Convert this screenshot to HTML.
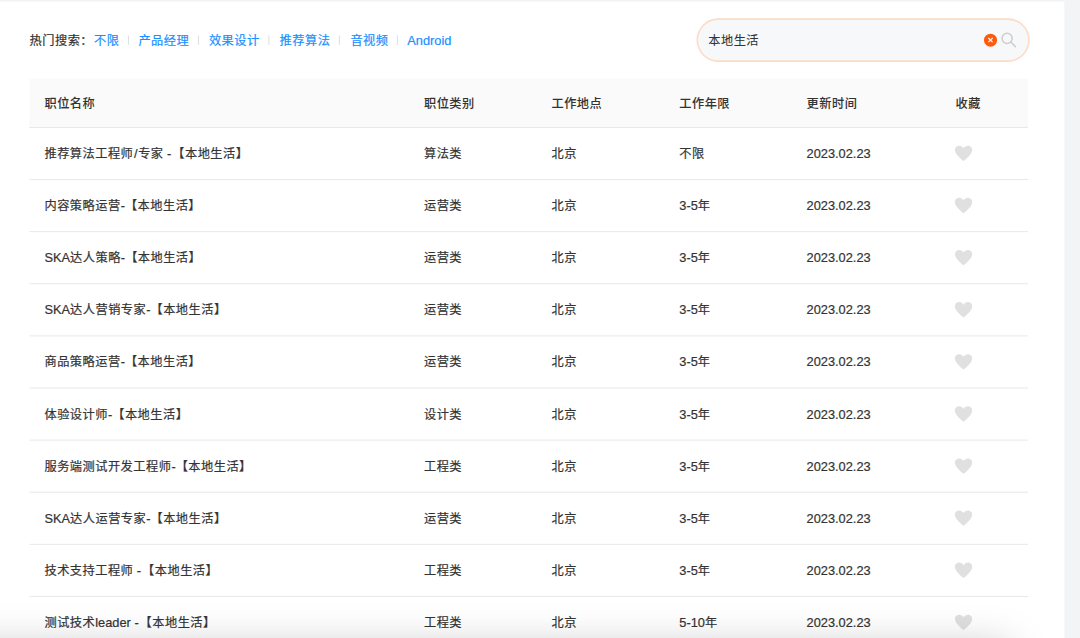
<!DOCTYPE html>
<html lang="zh-CN"><head><meta charset="utf-8"><title>职位列表</title>
<style>
html,body{margin:0;padding:0;}
body{width:1080px;height:638px;overflow:hidden;background:#f3f4f6;position:relative;
font-family:"Liberation Sans","Noto Sans CJK SC",sans-serif;font-size:12.2px;color:#333;}
#panel{position:absolute;left:0;top:2px;width:1064px;height:636px;background:#fff;}
#shapes{position:absolute;left:0;top:0;}
.t{position:absolute;height:20px;line-height:20px;white-space:nowrap;color:#333;letter-spacing:0.5px;-webkit-text-stroke:0.2px #333;}
.l{font-size:12.8px;letter-spacing:0;}
.sp{margin-right:-2.6px;}
.sl{margin:0 0.65px;}
.t.h{font-weight:500;color:#333;-webkit-text-stroke:0.05px #333;}
.t.s{-webkit-text-stroke:0.08px #333;}
.t.a{color:#1890ff;-webkit-text-stroke:0.2px #1890ff;}
#shadow{position:absolute;left:0;top:560px;width:1064.5px;height:78px;overflow:hidden;pointer-events:none;}
#shadow i{position:absolute;left:-120px;top:86px;width:1130px;height:80px;box-shadow:0 0 42px rgba(0,0,0,0.22);}
</style></head><body>
<div id="panel"></div>
<svg id="shapes" width="1080" height="638" viewBox="0 0 1080 638">
<rect x="0" y="1.7" width="1064.4" height="640" fill="#fff"/>
<rect x="29.4" y="79.0" width="998.6" height="47.94" fill="#fafafa"/>
<rect x="29.4" y="126.94" width="998.6" height="1" fill="#e8e8e8"/>
<rect x="29.4" y="179.05" width="998.6" height="1" fill="#e8e8e8"/>
<rect x="29.4" y="231.16" width="998.6" height="1" fill="#e8e8e8"/>
<rect x="29.4" y="283.27" width="998.6" height="1" fill="#e8e8e8"/>
<rect x="29.4" y="335.38" width="998.6" height="1" fill="#e8e8e8"/>
<rect x="29.4" y="387.49" width="998.6" height="1" fill="#e8e8e8"/>
<rect x="29.4" y="439.60" width="998.6" height="1" fill="#e8e8e8"/>
<rect x="29.4" y="491.71" width="998.6" height="1" fill="#e8e8e8"/>
<rect x="29.4" y="543.82" width="998.6" height="1" fill="#e8e8e8"/>
<rect x="29.4" y="595.93" width="998.6" height="1" fill="#e8e8e8"/>
<rect x="29.4" y="648.04" width="998.6" height="1" fill="#e8e8e8"/>
<path transform="translate(954.8 145.75)" d="M8.75 15.5 C8.3 15.1 1.2 9.6 0.3 5.6 C-0.5 2.2 1.6 0 4.3 0 C6.2 0 7.8 1 8.75 2.6 C9.7 1 11.3 0 13.2 0 C15.9 0 18 2.2 17.2 5.6 C16.3 9.6 9.2 15.1 8.75 15.5 Z" fill="#e0e0e0"/>
<path transform="translate(954.8 197.86)" d="M8.75 15.5 C8.3 15.1 1.2 9.6 0.3 5.6 C-0.5 2.2 1.6 0 4.3 0 C6.2 0 7.8 1 8.75 2.6 C9.7 1 11.3 0 13.2 0 C15.9 0 18 2.2 17.2 5.6 C16.3 9.6 9.2 15.1 8.75 15.5 Z" fill="#e0e0e0"/>
<path transform="translate(954.8 249.96)" d="M8.75 15.5 C8.3 15.1 1.2 9.6 0.3 5.6 C-0.5 2.2 1.6 0 4.3 0 C6.2 0 7.8 1 8.75 2.6 C9.7 1 11.3 0 13.2 0 C15.9 0 18 2.2 17.2 5.6 C16.3 9.6 9.2 15.1 8.75 15.5 Z" fill="#e0e0e0"/>
<path transform="translate(954.8 302.07)" d="M8.75 15.5 C8.3 15.1 1.2 9.6 0.3 5.6 C-0.5 2.2 1.6 0 4.3 0 C6.2 0 7.8 1 8.75 2.6 C9.7 1 11.3 0 13.2 0 C15.9 0 18 2.2 17.2 5.6 C16.3 9.6 9.2 15.1 8.75 15.5 Z" fill="#e0e0e0"/>
<path transform="translate(954.8 354.19)" d="M8.75 15.5 C8.3 15.1 1.2 9.6 0.3 5.6 C-0.5 2.2 1.6 0 4.3 0 C6.2 0 7.8 1 8.75 2.6 C9.7 1 11.3 0 13.2 0 C15.9 0 18 2.2 17.2 5.6 C16.3 9.6 9.2 15.1 8.75 15.5 Z" fill="#e0e0e0"/>
<path transform="translate(954.8 406.30)" d="M8.75 15.5 C8.3 15.1 1.2 9.6 0.3 5.6 C-0.5 2.2 1.6 0 4.3 0 C6.2 0 7.8 1 8.75 2.6 C9.7 1 11.3 0 13.2 0 C15.9 0 18 2.2 17.2 5.6 C16.3 9.6 9.2 15.1 8.75 15.5 Z" fill="#e0e0e0"/>
<path transform="translate(954.8 458.40)" d="M8.75 15.5 C8.3 15.1 1.2 9.6 0.3 5.6 C-0.5 2.2 1.6 0 4.3 0 C6.2 0 7.8 1 8.75 2.6 C9.7 1 11.3 0 13.2 0 C15.9 0 18 2.2 17.2 5.6 C16.3 9.6 9.2 15.1 8.75 15.5 Z" fill="#e0e0e0"/>
<path transform="translate(954.8 510.51)" d="M8.75 15.5 C8.3 15.1 1.2 9.6 0.3 5.6 C-0.5 2.2 1.6 0 4.3 0 C6.2 0 7.8 1 8.75 2.6 C9.7 1 11.3 0 13.2 0 C15.9 0 18 2.2 17.2 5.6 C16.3 9.6 9.2 15.1 8.75 15.5 Z" fill="#e0e0e0"/>
<path transform="translate(954.8 562.62)" d="M8.75 15.5 C8.3 15.1 1.2 9.6 0.3 5.6 C-0.5 2.2 1.6 0 4.3 0 C6.2 0 7.8 1 8.75 2.6 C9.7 1 11.3 0 13.2 0 C15.9 0 18 2.2 17.2 5.6 C16.3 9.6 9.2 15.1 8.75 15.5 Z" fill="#e0e0e0"/>
<path transform="translate(954.8 614.74)" d="M8.75 15.5 C8.3 15.1 1.2 9.6 0.3 5.6 C-0.5 2.2 1.6 0 4.3 0 C6.2 0 7.8 1 8.75 2.6 C9.7 1 11.3 0 13.2 0 C15.9 0 18 2.2 17.2 5.6 C16.3 9.6 9.2 15.1 8.75 15.5 Z" fill="#e0e0e0"/>
<rect x="697.3" y="19.1" width="331.6" height="42" rx="21" fill="#f7f8fa" stroke="#ffdac6" stroke-width="1.6"/>
<circle cx="990.5" cy="40.2" r="6.5" fill="#fe5a0e"/>
<path d="M988.4 38.0 L992.6 42.2 M992.6 38.0 L988.4 42.2" stroke="#fff" stroke-width="1.1" fill="none"/>
<circle cx="1007.1" cy="38.3" r="5.1" fill="none" stroke="#cdcdcd" stroke-width="1.5"/>
<path d="M1010.9 42.1 L1015.5 46.8" stroke="#cdcdcd" stroke-width="1.5" fill="none" stroke-linecap="round"/>
<rect x="127.9" y="35.4" width="1" height="9.4" fill="#dedede"/>
<rect x="197.9" y="35.4" width="1" height="9.4" fill="#dedede"/>
<rect x="268.4" y="35.4" width="1" height="9.4" fill="#dedede"/>
<rect x="338.8" y="35.4" width="1" height="9.4" fill="#dedede"/>
<rect x="396.8" y="35.4" width="1" height="9.4" fill="#dedede"/>
</svg>
<div class="t h" style="left:44.5px;top:94.40px">职位名称</div>
<div class="t h" style="left:424px;top:94.40px">职位类别</div>
<div class="t h" style="left:551.5px;top:94.40px">工作地点</div>
<div class="t h" style="left:679.3px;top:94.40px">工作年限</div>
<div class="t h" style="left:806.6px;top:94.40px">更新时间</div>
<div class="t h" style="left:955.5px;top:94.40px">收藏</div>
<div class="t " style="left:44.5px;top:143.94px">推荐算法工程师<span class="l sl">/</span>专家<span class="l sp"> - </span>【本地生活】</div>
<div class="t " style="left:424px;top:143.94px">算法类</div>
<div class="t " style="left:551.5px;top:143.94px">北京</div>
<div class="t " style="left:679.3px;top:143.94px">不限</div>
<div class="t " style="left:806.6px;top:143.94px"><span class="l">2023.02.23</span></div>
<div class="t " style="left:44.5px;top:196.06px">内容策略运营<span class="l">-</span>【本地生活】</div>
<div class="t " style="left:424px;top:196.06px">运营类</div>
<div class="t " style="left:551.5px;top:196.06px">北京</div>
<div class="t " style="left:679.3px;top:196.06px"><span class="l">3-5</span>年</div>
<div class="t " style="left:806.6px;top:196.06px"><span class="l">2023.02.23</span></div>
<div class="t " style="left:44.5px;top:248.16px"><span class="l">SKA</span>达人策略<span class="l">-</span>【本地生活】</div>
<div class="t " style="left:424px;top:248.16px">运营类</div>
<div class="t " style="left:551.5px;top:248.16px">北京</div>
<div class="t " style="left:679.3px;top:248.16px"><span class="l">3-5</span>年</div>
<div class="t " style="left:806.6px;top:248.16px"><span class="l">2023.02.23</span></div>
<div class="t " style="left:44.5px;top:300.27px"><span class="l">SKA</span>达人营销专家<span class="l">-</span>【本地生活】</div>
<div class="t " style="left:424px;top:300.27px">运营类</div>
<div class="t " style="left:551.5px;top:300.27px">北京</div>
<div class="t " style="left:679.3px;top:300.27px"><span class="l">3-5</span>年</div>
<div class="t " style="left:806.6px;top:300.27px"><span class="l">2023.02.23</span></div>
<div class="t " style="left:44.5px;top:352.38px">商品策略运营<span class="l">-</span>【本地生活】</div>
<div class="t " style="left:424px;top:352.38px">运营类</div>
<div class="t " style="left:551.5px;top:352.38px">北京</div>
<div class="t " style="left:679.3px;top:352.38px"><span class="l">3-5</span>年</div>
<div class="t " style="left:806.6px;top:352.38px"><span class="l">2023.02.23</span></div>
<div class="t " style="left:44.5px;top:404.50px">体验设计师<span class="l">-</span>【本地生活】</div>
<div class="t " style="left:424px;top:404.50px">设计类</div>
<div class="t " style="left:551.5px;top:404.50px">北京</div>
<div class="t " style="left:679.3px;top:404.50px"><span class="l">3-5</span>年</div>
<div class="t " style="left:806.6px;top:404.50px"><span class="l">2023.02.23</span></div>
<div class="t " style="left:44.5px;top:456.60px">服务端测试开发工程师<span class="l">-</span>【本地生活】</div>
<div class="t " style="left:424px;top:456.60px">工程类</div>
<div class="t " style="left:551.5px;top:456.60px">北京</div>
<div class="t " style="left:679.3px;top:456.60px"><span class="l">3-5</span>年</div>
<div class="t " style="left:806.6px;top:456.60px"><span class="l">2023.02.23</span></div>
<div class="t " style="left:44.5px;top:508.72px"><span class="l">SKA</span>达人运营专家<span class="l">-</span>【本地生活】</div>
<div class="t " style="left:424px;top:508.72px">运营类</div>
<div class="t " style="left:551.5px;top:508.72px">北京</div>
<div class="t " style="left:679.3px;top:508.72px"><span class="l">3-5</span>年</div>
<div class="t " style="left:806.6px;top:508.72px"><span class="l">2023.02.23</span></div>
<div class="t " style="left:44.5px;top:560.82px">技术支持工程师<span class="l sp"> - </span>【本地生活】</div>
<div class="t " style="left:424px;top:560.82px">工程类</div>
<div class="t " style="left:551.5px;top:560.82px">北京</div>
<div class="t " style="left:679.3px;top:560.82px"><span class="l">3-5</span>年</div>
<div class="t " style="left:806.6px;top:560.82px"><span class="l">2023.02.23</span></div>
<div class="t " style="left:44.5px;top:612.94px">测试技术<span class="l sp">leader - </span>【本地生活】</div>
<div class="t " style="left:424px;top:612.94px">工程类</div>
<div class="t " style="left:551.5px;top:612.94px">北京</div>
<div class="t " style="left:679.3px;top:612.94px"><span class="l">5-10</span>年</div>
<div class="t " style="left:806.6px;top:612.94px"><span class="l">2023.02.23</span></div>
<div class="t " style="left:29.6px;top:31.00px">热门搜索：</div>
<div class="t a" style="left:94px;top:31.00px">不限</div>
<div class="t a" style="left:138.4px;top:31.00px">产品经理</div>
<div class="t a" style="left:208.9px;top:31.00px">效果设计</div>
<div class="t a" style="left:279.6px;top:31.00px">推荐算法</div>
<div class="t a" style="left:350.4px;top:31.00px">音视频</div>
<div class="t a" style="left:407.3px;top:31.00px"><span class="l">Android</span></div>
<div class="t s" style="left:708.3px;top:31.20px">本地生活</div>
<div id="shadow"><i></i></div>
</body></html>
